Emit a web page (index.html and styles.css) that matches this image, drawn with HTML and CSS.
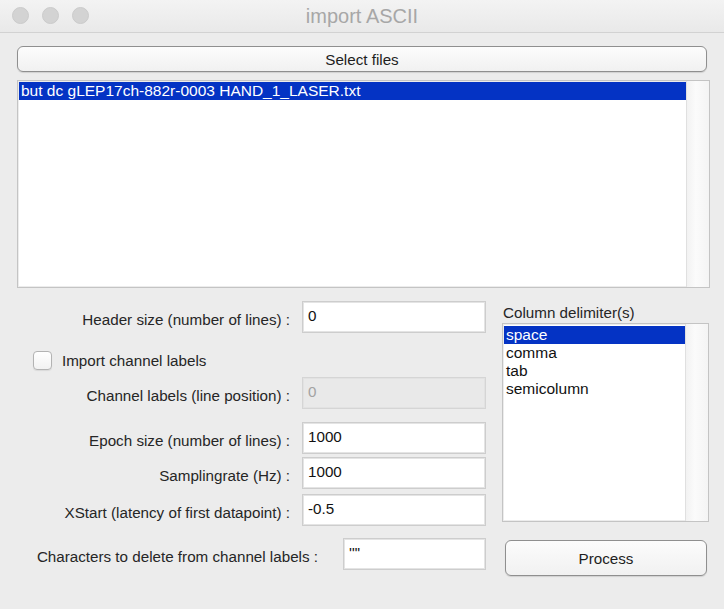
FILE: index.html
```html
<!DOCTYPE html>
<html>
<head>
<meta charset="utf-8">
<title>import ASCII</title>
<link rel="stylesheet" href="styles.css">
</head>
<body>
<div class="window">
  <div class="titlebar">
    <div class="lights">
      <span class="light"></span><span class="light"></span><span class="light"></span>
    </div>
    <div class="title">import ASCII</div>
    <div class="spacer"></div>
  </div>
  <div class="content">
    <button class="btn btn-select">Select files</button>
    <div class="listbox listbox-files">
      <div class="items">
        <div class="item selected">but dc gLEP17ch-882r-0003 HAND_1_LASER.txt</div>
      </div>
      <div class="scroll"></div>
    </div>
    <div class="lower">
      <div class="form">
        <div class="row row-header">
          <label class="label">Header size (number of lines) :</label>
          <div class="input">0</div>
        </div>
        <div class="row-check">
          <span class="checkbox"></span>
          <span class="check-label">Import channel labels</span>
        </div>
        <div class="row row-chan">
          <label class="label">Channel labels (line position) :</label>
          <div class="input disabled">0</div>
        </div>
        <div class="row row-epoch">
          <label class="label">Epoch size (number of lines) :</label>
          <div class="input">1000</div>
        </div>
        <div class="row row-rate">
          <label class="label">Samplingrate (Hz) :</label>
          <div class="input">1000</div>
        </div>
        <div class="row row-xstart">
          <label class="label">XStart (latency of first datapoint) :</label>
          <div class="input">-0.5</div>
        </div>
        <div class="row-chars">
          <label class="label">Characters to delete from channel labels :</label>
          <div class="input input-short">'"'</div>
        </div>
      </div>
      <div class="side">
        <div class="side-label">Column delimiter(s)</div>
        <div class="listbox listbox-delim">
          <div class="items">
            <div class="item selected">space</div>
            <div class="item">comma</div>
            <div class="item">tab</div>
            <div class="item">semicolumn</div>
          </div>
          <div class="scroll"></div>
        </div>
        <button class="btn btn-process">Process</button>
      </div>
    </div>
  </div>
</div>
</body>
</html>
```

FILE: styles.css
```css
* { box-sizing: border-box; }

html, body {
  margin: 0;
  padding: 0;
  background: #ececec;
}

body {
  font-family: "Liberation Sans", Arial, sans-serif;
  font-size: 15.2px;
  color: #262626;
}

.window {
  width: 724px;
  height: 609px;
  background: #ececec;
  overflow: hidden;
}

.titlebar {
  height: 33px;
  display: grid;
  grid-template-columns: 1fr auto 1fr;
  align-items: center;
  background: linear-gradient(#f3f3f3, #e9e9e9);
  border-bottom: 1px solid #d2d2d2;
}

.lights {
  display: flex;
  gap: 13px;
  padding-left: 12px;
  padding-bottom: 2px;
}

.light {
  width: 17px;
  height: 17px;
  border-radius: 50%;
  background: #d3d3d3;
  border: 1px solid #cbcbcb;
}

.title {
  font-size: 20px;
  color: #a7a7a7;
  padding-top: 1px;
}

.content {
  padding: 13px 0 0 17px;
}

.btn {
  display: block;
  font-family: "Liberation Sans", Arial, sans-serif;
  font-size: 15.2px;
  color: #1e1e1e;
  background: linear-gradient(#fcfcfc, #f1f1f1);
  border: 1px solid #8f8f8f;
  border-radius: 6px;
  box-shadow: 0 1px 1px rgba(0, 0, 0, 0.12);
  padding: 0;
  margin: 0;
}

.btn-select {
  width: 690px;
  height: 26px;
}

.listbox {
  display: flex;
  background: #ffffff;
  border: 1px solid #c4c4c4;
  box-shadow: inset 0 0 0 1px #ececec;
}

.listbox .items {
  flex: 1;
  padding: 1px 0 0 1px;
}

.item {
  height: 18px;
  line-height: 18px;
  padding-left: 2px;
  font-size: 15.5px;
  color: #111111;
  white-space: nowrap;
}

.item.selected {
  background: #0433c4;
  color: #ffffff;
}

.scroll {
  width: 23px;
  background: linear-gradient(90deg, #f2f2f2, #fbfbfb 40%, #f4f4f4);
  border-left: 1px solid #e0e0e0;
}

.listbox-files {
  margin-top: 8px;
  width: 693px;
  height: 208px;
}

.lower {
  display: flex;
  gap: 16px;
}

.form {
  width: 469px;
  display: flex;
  flex-direction: column;
}

.row {
  display: grid;
  grid-template-columns: 273px 184px;
  column-gap: 12px;
  align-items: center;
}

.label {
  text-align: right;
  white-space: nowrap;
  color: #262626;
  padding-top: 5px;
}

.input {
  height: 32px;
  line-height: 28px;
  padding-left: 5px;
  background: #ffffff;
  border: 1px solid #cdcdcd;
  box-shadow: inset 0 0 0 1px #e4e4e4;
  color: #111111;
  white-space: nowrap;
}

.input.disabled {
  background: #e9e9e9;
  color: #a3a3a3;
  border-color: #d5d5d5;
  box-shadow: inset 0 0 0 1px #e2e2e2;
}

.row-header { margin-top: 13px; }

.row-check {
  margin-top: 16px;
  height: 22px;
  display: flex;
  align-items: center;
  padding-left: 16px;
  gap: 10px;
}

.checkbox {
  width: 19px;
  height: 19px;
  border: 1px solid #b3b3b3;
  border-radius: 4px;
  background: linear-gradient(#ffffff, #f2f2f2);
  box-shadow: 0 1px 1px rgba(0, 0, 0, 0.08);
}

.check-label { color: #262626; }

.row-chan { margin-top: 6px; }
.row-epoch { margin-top: 13px; }
.row-rate { margin-top: 3px; }
.row-xstart { margin-top: 5px; }

.row-chars {
  margin-top: 12px;
  display: flex;
  align-items: center;
  justify-content: flex-end;
  gap: 25px;
}

.input-short { width: 143px; }

.side {
  width: 208px;
  display: flex;
  flex-direction: column;
}

.side-label {
  margin-top: 16px;
  padding-left: 1px;
  height: 18px;
  line-height: 18px;
  color: #262626;
}

.listbox-delim {
  margin-top: 1px;
  width: 207px;
  height: 199px;
}

.listbox-delim .items {
  padding: 2px 0 0 1px;
}

.btn-process {
  margin-top: 18px;
  margin-left: 3px;
  width: 202px;
  height: 36px;
}
```
